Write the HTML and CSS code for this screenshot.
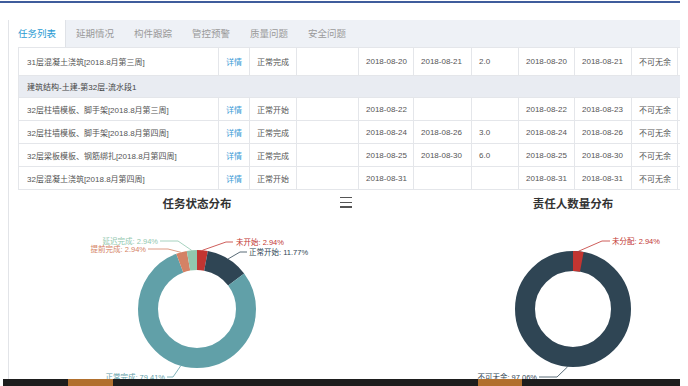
FILE: index.html
```html
<!DOCTYPE html>
<html>
<head lang="zh">
    <meta charset="UTF-8">
    <title>任务列表</title>
    <link rel="stylesheet" href="styles.css">
</head>
<body>
<div id="topline"></div>
<div id="panel">
    <ul id="tabs">
        <li class="selected">任务列表</li>
        <li>延期情况</li>
        <li>构件跟踪</li>
        <li>管控预警</li>
        <li>质量问题</li>
        <li>安全问题</li>
    </ul>
    <div id="content">
        <table id="list">
            <colgroup>
                <col style="width:200px"><col style="width:31px"><col style="width:47px"><col style="width:62px">
                <col style="width:55px"><col style="width:58px"><col style="width:47px"><col style="width:56px">
                <col style="width:57px"><col style="width:46px"><col style="width:41px">
            </colgroup>
            <tr class="first">
                <td class="name">31层混凝土浇筑[2018.8月第三周]</td>
                <td class="link">详情</td>
                <td>正常完成</td>
                <td></td>
                <td>2018-08-20</td>
                <td>2018-08-21</td>
                <td>2.0</td>
                <td>2018-08-20</td>
                <td>2018-08-21</td>
                <td>不可无余</td>
                <td></td>
            </tr>
            <tr class="group">
                <td colspan="11">建筑结构-土建-第32层-流水段1</td>
            </tr>
            <tr>
                <td class="name">32层柱墙模板、脚手架[2018.8月第三周]</td>
                <td class="link">详情</td>
                <td>正常开始</td>
                <td></td>
                <td>2018-08-22</td>
                <td></td>
                <td></td>
                <td>2018-08-22</td>
                <td>2018-08-23</td>
                <td>不可无余</td>
                <td></td>
            </tr>
            <tr>
                <td class="name">32层柱墙模板、脚手架[2018.8月第四周]</td>
                <td class="link">详情</td>
                <td>正常完成</td>
                <td></td>
                <td>2018-08-24</td>
                <td>2018-08-26</td>
                <td>3.0</td>
                <td>2018-08-24</td>
                <td>2018-08-26</td>
                <td>不可无余</td>
                <td></td>
            </tr>
            <tr>
                <td class="name">32层梁板模板、钢筋绑扎[2018.8月第四周]</td>
                <td class="link">详情</td>
                <td>正常完成</td>
                <td></td>
                <td>2018-08-25</td>
                <td>2018-08-30</td>
                <td>6.0</td>
                <td>2018-08-25</td>
                <td>2018-08-30</td>
                <td>不可无余</td>
                <td></td>
            </tr>
            <tr>
                <td class="name">32层混凝土浇筑[2018.8月第四周]</td>
                <td class="link">详情</td>
                <td>正常开始</td>
                <td></td>
                <td>2018-08-31</td>
                <td></td>
                <td></td>
                <td>2018-08-31</td>
                <td>2018-08-31</td>
                <td>不可无余</td>
                <td></td>
            </tr>
        </table>
        <div id="charts">
            <div class="chart chart-left">
                <h3>任务状态分布</h3>
                <span class="menu"><i></i><i></i><i></i></span>
                <svg class="pie" width="358" height="162" viewBox="0 0 358 162">
                    <g transform="rotate(-90 179 91)" fill="none" stroke-width="20">
                        <circle cx="179" cy="91" r="49" stroke="#c23531" stroke-dasharray="9.05 307.88"/>
                        <circle cx="179" cy="91" r="49" stroke="#2f4554" stroke-dasharray="36.24 307.88" stroke-dashoffset="-9.05"/>
                        <circle cx="179" cy="91" r="49" stroke="#61a0a8" stroke-dasharray="244.49 307.88" stroke-dashoffset="-45.29"/>
                        <circle cx="179" cy="91" r="49" stroke="#d48265" stroke-dasharray="9.05 307.88" stroke-dashoffset="-289.78"/>
                        <circle cx="179" cy="91" r="49" stroke="#91c7ae" stroke-dasharray="9.05 307.88" stroke-dashoffset="-298.83"/>
                    </g>
                    <g fill="none" stroke-width="0.8">
                        <polyline points="184.4,32.3 208,24 215,24" stroke="#c23531"/>
                        <polyline points="210,41 222,34 229,34" stroke="#2f4554"/>
                        <polyline points="173.6,32.3 160,23 142,23" stroke="#91c7ae"/>
                        <polyline points="162.8,34.3 150,31 130,31" stroke="#d48265"/>
                        <polyline points="162.8,147.7 155,159 149,159" stroke="#61a0a8"/>
                    </g>
                    <text x="218" y="26.7" fill="#c23531">未开始: 2.94%</text>
                    <text x="231" y="36.7" fill="#2f4554">正常开始: 11.77%</text>
                    <text x="140" y="25.7" fill="#91c7ae" text-anchor="end">延迟完成: 2.94%</text>
                    <text x="128" y="33.7" fill="#d48265" text-anchor="end">提前完成: 2.94%</text>
                    <text x="147" y="161.5" fill="#61a0a8" text-anchor="end">正常完成: 79.41%</text>
                </svg>
            </div>
            <div class="chart chart-right">
                <h3>责任人数量分布</h3>
                <svg class="pie" width="394" height="162" viewBox="0 0 394 162">
                    <g transform="rotate(-90 197 91)" fill="none" stroke-width="20">
                        <circle cx="197" cy="91" r="48" stroke="#2f4554"/>
                        <circle cx="197" cy="91" r="48" stroke="#c23531" stroke-dasharray="8.87 301.6"/>
                    </g>
                    <g fill="none" stroke-width="0.8">
                        <polyline points="202.4,33.3 226,23 234,23" stroke="#c23531"/>
                        <polyline points="191.6,148.8 181,159 163,159" stroke="#2f4554"/>
                    </g>
                    <text x="236" y="25.7" fill="#c23531">未分配: 2.94%</text>
                    <text x="161" y="161.5" fill="#2f4554" text-anchor="end">不可无余: 97.06%</text>
                </svg>
            </div>
        </div>
    </div>
</div>
<div id="bar"></div>
</body>
</html>
```

FILE: styles.css
```css
*{
    margin: 0;
    padding: 0;
}
body{
    background: #fff;
    font-family: "Liberation Sans", "Noto Sans CJK SC", sans-serif;
    color: #555;
    width: 688px;
    height: 386px;
    overflow: hidden;
}
ul{
    list-style: none;
}
#topline{
    width: 680px;
    height: 2px;
    margin-top: 1px;
    background: #3f5c9c;
}
#panel{
    width: 671px;
    height: 359px;
    margin: 17px 0 0 8px;
    border-left: 1px solid #e2e4e8;
    overflow: hidden;
}
#tabs{
    display: flex;
    height: 27px;
    background: #eef1f6;
}
#tabs li{
    padding: 0 10px;
    width: 38px;
    line-height: 27px;
    font-size: 9.5px;
    color: #9a9a9a;
    white-space: nowrap;
}
#tabs li.selected{
    background: #fff;
    color: #2a9bd3;
    border-right: 1px solid #dfe2e7;
    width: 37px;
    padding-left: 9px;
}
#content{
    padding-left: 9px;
}
#list{
    table-layout: fixed;
    width: 700px;
    border-collapse: collapse;
    font-size: 8px;
}
#list td{
    border: 1px solid #e4e6ea;
    height: 22px;
    padding: 0 7px;
    white-space: nowrap;
    overflow: hidden;
    color: #555;
}
#list tr.first td{
    height: 27px;
}
#list td.name{
    padding-left: 8px;
}
#list td.link{
    padding: 0;
    text-align: center;
    color: #3a9ad6;
}
#list tr.group td{
    height: 21px;
    background: #e9ecf2;
    padding-left: 8px;
    color: #444;
}
#charts{
    display: flex;
}
.chart{
    flex-shrink: 0;
    height: 190px;
    position: relative;
    overflow: hidden;
}
.chart-left{
    width: 358px;
}
.chart-right{
    width: 394px;
}
.chart h3{
    height: 28px;
    line-height: 28px;
    font-size: 11.5px;
    font-weight: bold;
    color: #333;
    text-align: center;
}
.pie{
    display: block;
}
.pie text{
    font-size: 7.5px;
    font-family: "Liberation Sans", "Noto Sans CJK SC", sans-serif;
}
.menu{
    position: absolute;
    top: 7px;
    right: 24px;
    width: 12px;
}
.menu i{
    display: block;
    height: 1.4px;
    margin-bottom: 3.3px;
    background: #555;
}
#bar{
    position: relative;
    width: 677px;
    height: 7px;
    margin-left: 3px;
    background: linear-gradient(to right, #1e1e1e 65px, #b1702e 65px, #b1702e 110px, #1e1e1e 110px, #1e1e1e 475px, #b1702e 475px, #b1702e 519px, #1e1e1e 519px);
}
```
